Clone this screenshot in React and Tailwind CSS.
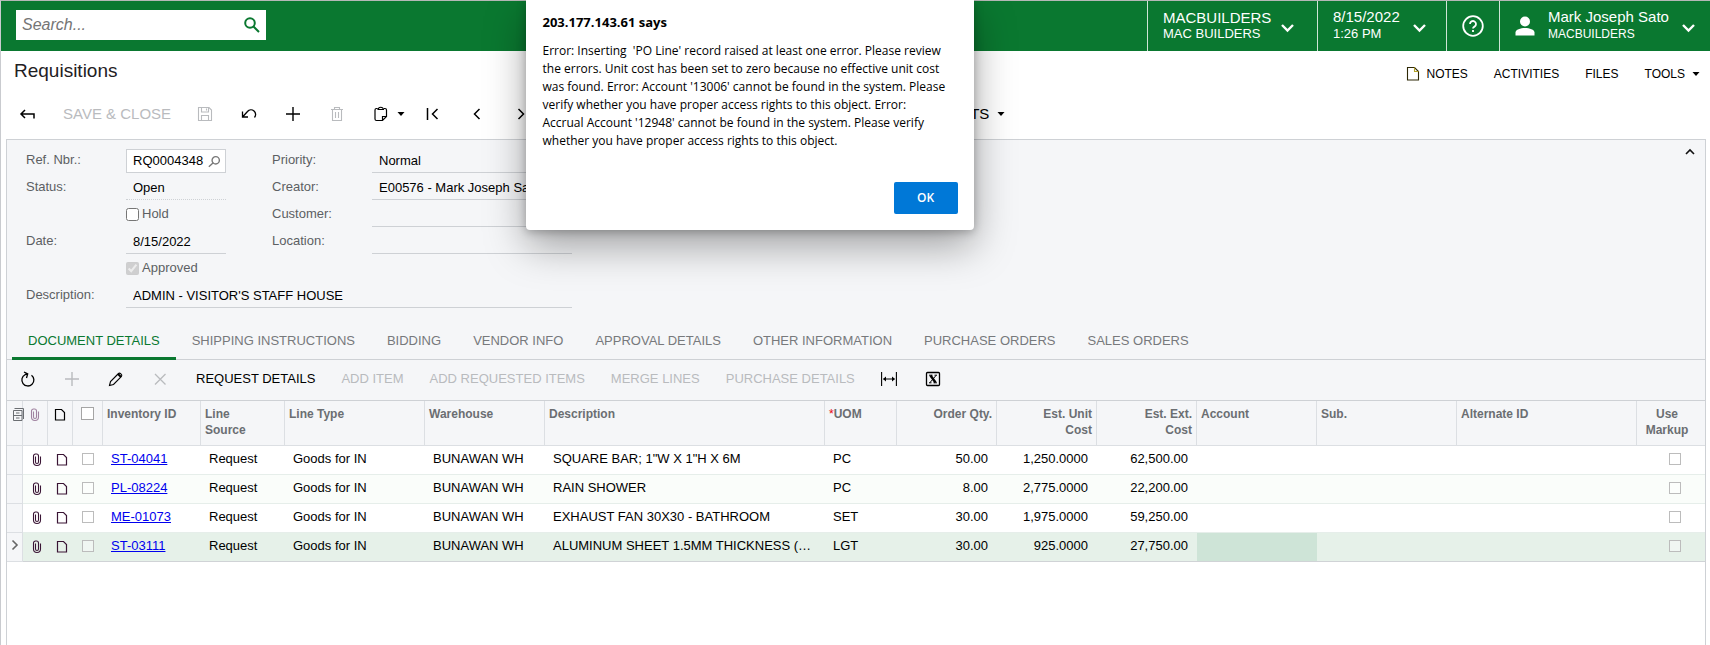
import { useState } from "react";

function Chevron() {
  return (
    <svg className="mt-1 h-[10px] w-[14px]" viewBox="0 0 14 10" fill="none" stroke="currentColor" strokeWidth="2.4">
      <path d="M1 2 6.500 7.500 12 2" />
    </svg>
  );
}

function Caret() {
  return (
    <svg className="h-1 w-2" viewBox="0 0 8 4" fill="currentColor">
      <path d="M0.5 0h7L4 4z" />
    </svg>
  );
}

function Icon({ size = 16, children, w = 1.3, className = "" }) {
  return (
    <svg
      className={`inline-block shrink-0 ${className}`}
      width={size}
      height={size}
      viewBox="0 0 16 16"
      fill="none"
      stroke="currentColor"
      strokeWidth={w}
    >
      {children}
    </svg>
  );
}

const Clip = ({ className = "" }) => (
  <Icon w={1.1} className={className}>
    <path d="M6.5 4.5v5.500a1.500 1.500 0 0 0 3 0V4a2 2 0 0 0-2-2h-1a2 2 0 0 0-2 2v6a3.500 3.500 0 0 0 7 0V4.500" />
  </Icon>
);

const Page = ({ className = "" }) => (
  <Icon w={1.2} className={className}>
    <path d="M3.5 2.5h6l3 3v7.500h-9z" />
  </Icon>
);

const Box = ({ label, className = "size-3 border-[#bcbcbc] bg-white/40" }) => (
  <input type="checkbox" aria-label={label} className={`block appearance-none border ${className}`} />
);

function Tool({ label, text, disabled, className = "", children }) {
  return (
    <button
      type="button"
      aria-label={label}
      disabled={disabled}
      className={`flex h-6 shrink-0 items-center justify-center whitespace-nowrap text-black disabled:text-[#b9bbbe] ${className}`}
    >
      {children || text}
    </button>
  );
}

const TABS = [
  "DOCUMENT DETAILS",
  "SHIPPING INSTRUCTIONS",
  "BIDDING",
  "VENDOR INFO",
  "APPROVAL DETAILS",
  "OTHER INFORMATION",
  "PURCHASE ORDERS",
  "SALES ORDERS",
];

const ROWS = [
  ["ST-04041", 'SQUARE BAR; 1"W X 1"H X 6M', "PC", "50.00", "1,250.0000", "62,500.00"],
  ["PL-08224", "RAIN SHOWER", "PC", "8.00", "2,775.0000", "22,200.00"],
  ["ME-01073", "EXHAUST FAN 30X30 - BATHROOM", "SET", "30.00", "1,975.0000", "59,250.00"],
  ["ST-03111", "ALUMINUM SHEET 1.5MM THICKNESS (…", "LGT", "30.00", "925.0000", "27,750.00"],
];

const COLS = [
  "w-4", "w-[25px]", "w-[25px]", "w-[30px]", "w-[98px]", "w-[84px]", "w-[140px]", "w-[120px]",
  "w-[280px]", "w-[72px]", "w-[100px]", "w-[100px]", "w-[100px]", "w-[120px]", "w-[140px]", "w-[180px]", "",
];

function Row({ row, index }) {
  const active = index === 3;
  const tone = active ? "bg-[#e6f1e9]" : index === 1 ? "bg-[#fafdfa]" : "bg-white";
  const line = active ? "border-[#d0d3d6]" : "border-[#e6eeea]";
  const cell = `h-[29px] border-b ${line} px-2 pb-0.5 whitespace-nowrap`;
  const number = `h-[29px] border-b ${line} pr-[9px] pb-0.5 text-right whitespace-nowrap`;
  const mark = `border-b ${line} pb-0.5`;
  const [id, text, uom, qty, unit, ext] = row;
  return (
    <tr className={tone}>
      <td className="border-r border-b border-[#dcdfe3] bg-[#f5f6f8] pb-1">
        {active && (
          <svg className="mx-auto h-3 w-2" viewBox="0 0 8 12" fill="none" stroke="#666" strokeWidth="1.6">
            <path d="M1.5 1.5 6 6l-4.500 4.500" />
          </svg>
        )}
      </td>
      <td className={`${mark} pl-[6px]`}><Clip className="block text-[#3a1535]" /></td>
      <td className={`${mark} pl-[6px]`}><Page className="block text-[#3a1535]" /></td>
      <td className={`${mark} pl-[9px]`}><Box label={`Select ${id}`} /></td>
      <td className={cell}><a href={`#${id}`} className="text-[#0000ee] underline">{id}</a></td>
      <td className={cell}>Request</td>
      <td className={cell}>Goods for IN</td>
      <td className={cell}>BUNAWAN WH</td>
      <td className={cell}>{text}</td>
      <td className={cell}>{uom}</td>
      <td className={number}>{qty}</td>
      <td className={number}>{unit}</td>
      <td className={number}>{ext}</td>
      <td className={`${cell} ${active ? "bg-[#cee4d7]" : ""}`} />
      <td className={cell} />
      <td className={cell} />
      <td className={cell}><div className="flex justify-center pl-2"><Box label={`Use markup for ${id}`} /></div></td>
    </tr>
  );
}

function Field({ id, label, value, className = "" }) {
  return (
    <>
      <label htmlFor={id} className="leading-[22px] text-[#5c5f63]">{label}</label>
      <input
        id={id}
        defaultValue={value}
        className={`h-6 min-w-0 border-b border-[#ced1d5] bg-transparent px-[7px] text-black outline-none ${className}`}
      />
    </>
  );
}

export default function App() {
  const [open, setOpen] = useState(true);
  const th = "border-r border-b border-[#dcdfe3] px-1 pt-[5px] align-top font-bold last:border-r-0";
  return (
    <div className="relative flex min-h-screen flex-col border-t border-l border-t-[#b5b8b6] border-l-[#c9cbcf] bg-white font-['Liberation_Sans',Arial,sans-serif] text-[13px]">
      <header className="flex h-[50px] items-stretch bg-[#0a7830] text-white">
        <div className="mt-[9px] ml-[15px] flex h-[30px] w-[250px] items-center bg-white pr-[6px] pl-[6px]">
          <input aria-label="Search" placeholder="Search..." className="min-w-0 flex-1 text-base text-black italic outline-none placeholder:text-[#757575]" />
          <Icon w={2} className="text-[#0a7830]">
            <circle cx="6" cy="6" r="4.8" /><path d="m9.500 9.500 5.500 5.500" />
          </Icon>
        </div>
        <div className="flex-1" />
        <button type="button" className="flex w-[170px] items-center border-l border-white/80 pl-[15px] text-left">
          <span className="w-[118px]"><span className="block text-[15px] leading-4">MACBUILDERS</span><span className="block text-[13px] leading-4">MAC BUILDERS</span></span>
          <Chevron />
        </button>
        <button type="button" className="flex w-[129px] items-center border-l border-white/80 pl-[15px] text-left">
          <span className="w-[80px] pb-0.5"><span className="block text-[15px] leading-[18px]">8/15/2022</span><span className="block text-[13px] leading-4">1:26 PM</span></span>
          <Chevron />
        </button>
        <button type="button" aria-label="Help" className="flex w-[53px] items-center justify-center border-l border-white/80">
          <svg className="size-[22px]" viewBox="0 0 22 22" fill="none" stroke="currentColor" strokeWidth="1.8">
            <circle cx="11" cy="11" r="9.8" /><path d="M8 9a3 3 0 1 1 4.500 2.600C11.300 12.300 11 12.600 11 13.600M11 15v2" />
          </svg>
        </button>
        <button type="button" className="flex w-[211px] items-center border-l border-white/80 pl-[15px] text-left">
          <svg className="mr-[13px] size-5" viewBox="0 0 20 20" fill="currentColor">
            <circle cx="10" cy="5.5" r="5" /><path d="M0.5 19.500v-3c0-3 5-4.500 9.500-4.500s9.500 1.500 9.500 4.500v3z" />
          </svg>
          <span className="w-[134px] pb-0.5"><span className="block text-[15px] leading-[18px]">Mark Joseph Sato</span><span className="block text-xs leading-4">MACBUILDERS</span></span>
          <Chevron />
        </button>
      </header>

      <div className="flex h-[44px] items-center pr-[6px] pl-[13px]">
        <h1 className="flex-1 pb-1 text-[19px] text-[#1f2023]">Requisitions</h1>
        <nav className="flex items-center gap-[26px] pt-px text-xs text-black">
          <button type="button" className="flex items-center gap-[6px]">
            <svg width="14" height="15" viewBox="0 0 14 15" fill="none" stroke="#2e2806" strokeWidth="1.1"><path d="M1.5 1.500h7l4 4v8.500h-11z" /><path d="M8.500 1.500v4h4" stroke="#b5a42a" /></svg>
            NOTES
          </button>
          <button type="button">ACTIVITIES</button>
          <button type="button">FILES</button>
          <button type="button" className="flex items-center gap-[7px] pr-1">TOOLS <Caret /></button>
        </nav>
      </div>

      <div className="flex h-[44px] items-center pb-[6px] pl-[18px] text-[15px]">
        <Tool label="Back"><Icon w={1.5}><path d="M6 4 2 8l4 4M1.500 8H15v4.500" /></Icon></Tool>
        <Tool text="SAVE & CLOSE" disabled className="ml-7" />
        <Tool label="Save" disabled className="ml-[26px]"><Icon w={1.1}><path d="M1.500 1.500h10.500l2.500 2.500v10.500h-13zM4.500 1.500v4.500h7v-4.500M9.500 2.500v2M4.500 14.500v-5h7v5" /></Icon></Tool>
        <Tool label="Undo" className="ml-7"><Icon w={1.3}><path d="M1.500 5.500v5.500H7M2 10.500l4.500-5a4.600 4.600 0 0 1 7 6" /></Icon></Tool>
        <Tool label="Add" className="ml-7"><Icon w={1.4}><path d="M8 1v14M1 8h14" /></Icon></Tool>
        <Tool label="Delete" disabled className="ml-7"><Icon w={1.1}><path d="M2 3.500h12M5.500 3.500v-2h5v2M3.500 3.500v11h9v-11M6.500 6v6M9.500 6v6" /></Icon></Tool>
        <Tool label="Clipboard" className="ml-7 gap-2"><Icon w={1.2}><path d="M4.500 2.500h-1a1.500 1.500 0 0 0-1.500 1.500v9a1.500 1.500 0 0 0 1.500 1.500h6l4-4V4a1.500 1.500 0 0 0-1.500-1.500h-1M5 3.500a2.800 2.800 0 0 1 5.500 0zM9.500 14.500v-4h4" /></Icon><Caret /></Tool>
        <Tool label="First" className="ml-5"><Icon w={1.5}><path d="M2.500 2v12M12.500 3 7.500 8l5 5" /></Icon></Tool>
        <Tool label="Previous" className="ml-7"><Icon w={1.5}><path d="M10.500 3 5.500 8l5 5" /></Icon></Tool>
        <Tool label="Next" className="ml-7"><Icon w={1.5}><path d="m5.500 3 5 5-5 5" /></Icon></Tool>
        <Tool label="Last" className="ml-7"><Icon w={1.5}><path d="M13 2v12M3 3l5.500 5L3 13" /></Icon></Tool>
        <Tool className="ml-[344px] gap-2">REPORTS <Caret /></Tool>
      </div>

      <main className="mr-1 ml-[5px] flex flex-1 flex-col border-x border-t border-[#ced1d5]">
        <section className="relative h-[186px] bg-[#f5f6f8] pt-[9px] pl-[19px]">
          <div className="grid w-[546px] grid-cols-[100px_100px_46px_100px_200px] gap-y-[3px]">
            <label htmlFor="ref" className="leading-[22px] text-[#5c5f63]">Ref. Nbr.:</label>
            <div className="flex h-6 items-center border border-[#ced1d5] bg-white pr-[3px] pl-[6px]">
              <input id="ref" defaultValue="RQ0004348" className="w-[75px] text-black outline-none" />
              <Icon size={13} w={1.7} className="text-[#777]"><circle cx="9.5" cy="6.500" r="4.500" /><path d="M6.500 9.500 1 14.500" /></Icon>
            </div>
            <span />
            <Field id="priority" label="Priority:" value="Normal" />
            <Field id="status" label="Status:" value="Open" className="border-dotted" />
            <span />
            <Field id="creator" label="Creator:" value="E00576 - Mark Joseph Sato" />
            <span />
            <label className="flex items-center gap-[3px] pb-0.5 text-[#5c5f63]"><input type="checkbox" className="size-[13px]" />Hold</label>
            <span />
            <Field id="customer" label="Customer:" />
            <Field id="date" label="Date:" value="8/15/2022" />
            <span />
            <Field id="location" label="Location:" />
            <span />
            <label className="col-span-4 flex h-6 items-center gap-[3px] pb-0.5 text-[#5c5f63]"><input type="checkbox" defaultChecked disabled className="size-[13px]" />Approved</label>
            <Field id="description" label="Description:" value="ADMIN - VISITOR'S STAFF HOUSE" className="col-span-4" />
          </div>
          <button type="button" aria-label="Collapse" className="absolute top-2 right-[10px]">
            <svg className="h-[7px] w-[10px]" viewBox="0 0 10 7" fill="none" stroke="#111" strokeWidth="1.6"><path d="m1 6 4-4 4 4" /></svg>
          </button>
        </section>

        <div role="tablist" className="flex h-[34px] items-stretch border-b border-[#ced1d5] bg-[#f5f6f8] pl-[5px] text-[13px] text-[#77797c]">
          {TABS.map((tab, i) => (
            <button
              key={tab}
              type="button"
              role="tab"
              aria-selected={i === 0}
              className="-mb-px border-b-[3px] border-transparent px-4 pb-0.5 whitespace-nowrap aria-selected:border-[#0a7830] aria-selected:text-[#0a7830]"
            >
              {tab}
            </button>
          ))}
        </div>

        <div className="flex h-10 items-center bg-[#f5f6f8] pb-0.5 pl-[13px] text-[13px]">
          <Tool label="Refresh"><Icon w={1.3}><path d="M11.500 4.200a6 6 0 1 1-6.500-.500L7.500 3M4 1l3.700 1.800L6.500 7" /></Icon></Tool>
          <Tool label="Add row" disabled className="ml-7"><Icon w={1.4}><path d="M8 1v14M1 8h14" /></Icon></Tool>
          <Tool label="Edit" className="ml-7"><Icon w={1.1}><path d="M1.500 14.500 2.500 10.500 10.500 2.500c1.200-1.200 4.200 1.200 3 2.800L5.500 13.500z" /><path d="m10 3 3 3" strokeWidth="2" /></Icon></Tool>
          <Tool label="Delete row" disabled className="ml-7"><Icon w={1.3}><path d="m3 3 10.500 10.500M13.500 3 3 13.500" /></Icon></Tool>
          <Tool text="REQUEST DETAILS" className="ml-7" />
          <Tool text="ADD ITEM" disabled className="ml-[26px]" />
          <Tool text="ADD REQUESTED ITEMS" disabled className="ml-[26px]" />
          <Tool text="MERGE LINES" disabled className="ml-[26px]" />
          <Tool text="PURCHASE DETAILS" disabled className="ml-[26px]" />
          <Tool label="Fit columns" className="ml-[26px]"><Icon w={1.1}><path d="M.6 1v14M15.400 1v14M2.500 8h11" /><path d="M5 5.500 2 8l3 2.500zM11 5.500 14 8l-3 2.500z" fill="currentColor" strokeWidth="0" /></Icon></Tool>
          <Tool label="Export" className="ml-7"><Icon w={1.3}><rect x="1.5" y="1.500" width="13" height="13" rx="1" /><path d="m5.500 4.500 5 7" strokeWidth="2.4" /><path d="M11 4.500l-6 7M4 4.200h3.500M9.500 4.200H12M4 11.800h2.500M8.500 11.800H12" strokeWidth="1" /></Icon></Tool>
        </div>

        <table className="w-full table-fixed border-separate border-spacing-0 border-t border-[#ced1d5] text-black">
          <colgroup>{COLS.map((w, i) => <col key={i} className={w} />)}</colgroup>
          <thead className="bg-[#f5f6f8] text-left text-xs leading-4 text-[#6b6e72]">
            <tr className="h-[45px]">
              <th aria-label="Settings" className={`${th} px-0`}>
                <svg className="mt-0.5 ml-0.5 block h-[13px] w-[11px]" viewBox="0 0 11 13" fill="none" stroke="currentColor">
                  <path d="M.5 2.500h8.500v10H.500zM1.500 .500h9v10.500M.500 7.500h8.500M3 5h3.500M3 10h3.500" />
                </svg>
              </th>
              <th aria-label="Files" className={`${th} px-0`}><Clip className="mx-auto block text-[#a083a0]" /></th>
              <th aria-label="Notes" className={`${th} px-0`}><Page className="mx-auto block text-black" /></th>
              <th className={`${th} px-0`}><div className="flex justify-center pt-px"><Box label="Select all" className="size-[13px] border-[#a5a5a5] bg-white" /></div></th>
              <th className={th}>Inventory ID</th>
              <th className={`${th} pr-6`}>Line Source</th>
              <th className={th}>Line Type</th>
              <th className={th}>Warehouse</th>
              <th className={th}>Description</th>
              <th className={th}><span className="font-normal text-red-600">*</span>UOM</th>
              <th className={`${th} text-right`}>Order Qty.</th>
              <th className={`${th} pl-10 text-right`}>Est. Unit Cost</th>
              <th className={`${th} pl-10 text-right`}>Est. Ext. Cost</th>
              <th className={th}>Account</th>
              <th className={th}>Sub.</th>
              <th className={th}>Alternate ID</th>
              <th className={`${th} pr-3 text-center`}>Use Markup</th>
            </tr>
          </thead>
          <tbody>{ROWS.map((row, i) => <Row key={row[0]} row={row} index={i} />)}</tbody>
        </table>
      </main>

      {open && (
        <div className="pointer-events-none absolute inset-x-0 -top-px flex justify-center pr-[212px]">
          <div role="alertdialog" aria-labelledby="dialog-title" className="pointer-events-auto flex h-[230px] w-[448px] flex-col rounded-b bg-white pr-4 pb-4 pl-[17px] font-['Open_Sans',sans-serif] text-xs text-black shadow-[0_16px_40px_rgba(0,0,0,0.35),0_2px_10px_rgba(0,0,0,0.25)]">
            <h2 id="dialog-title" className="mt-3 text-[13px] leading-5 font-bold">203.177.143.61 says</h2>
            <p className="mt-[10px] pr-[9px] leading-[18px] whitespace-pre-wrap">{"Error: Inserting  'PO Line' record raised at least one error. Please review the errors. Unit cost has been set to zero because no effective unit cost was found. Error: Account '13006' cannot be found in the system. Please verify whether you have proper access rights to this object. Error: Accrual Account '12948' cannot be found in the system. Please verify whether you have proper access rights to this object."}</p>
            <button type="button" onClick={() => setOpen(false)} className="mt-auto h-8 w-16 self-end rounded-[2px] bg-[#0078d7] font-semibold text-white">OK</button>
          </div>
        </div>
      )}
    </div>
  );
}
